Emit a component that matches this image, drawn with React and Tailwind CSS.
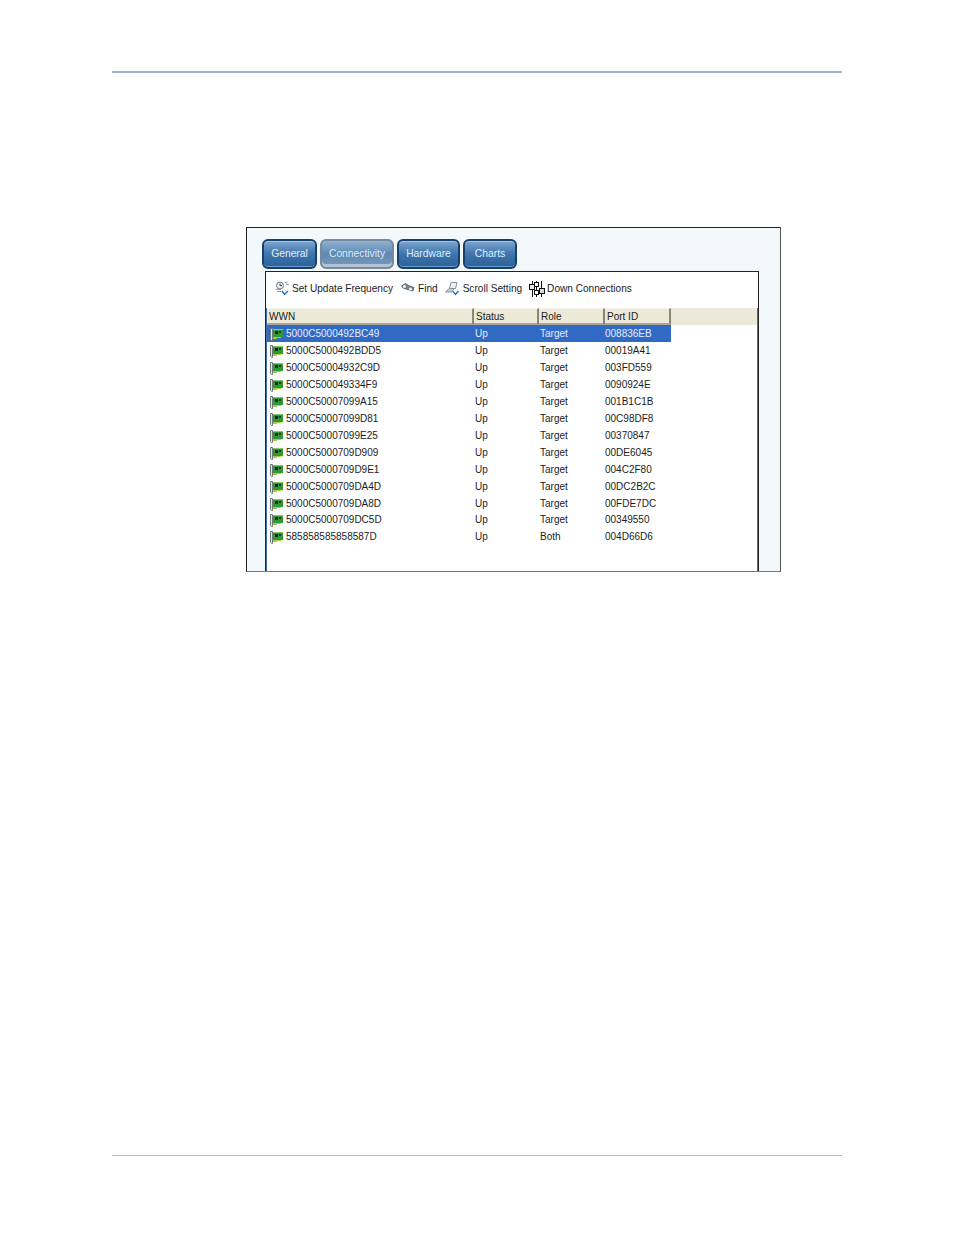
const rows = [
  ['5000C5000492BC49', 'Up', 'Target', '008836EB'],
  ['5000C5000492BDD5', 'Up', 'Target', '00019A41'],
  ['5000C50004932C9D', 'Up', 'Target', '003FD559'],
  ['5000C500049334F9', 'Up', 'Target', '0090924E'],
  ['5000C50007099A15', 'Up', 'Target', '001B1C1B'],
  ['5000C50007099D81', 'Up', 'Target', '00C98DF8'],
  ['5000C50007099E25', 'Up', 'Target', '00370847'],
  ['5000C5000709D909', 'Up', 'Target', '00DE6045'],
  ['5000C5000709D9E1', 'Up', 'Target', '004C2F80'],
  ['5000C5000709DA4D', 'Up', 'Target', '00DC2B2C'],
  ['5000C5000709DA8D', 'Up', 'Target', '00FDE7DC'],
  ['5000C5000709DC5D', 'Up', 'Target', '00349550'],
  ['585858585858587D', 'Up', 'Both', '004D66D6'],
];

const CardIcon = () => (
  <svg width="13" height="14" viewBox="0 0 13 14" className="shrink-0">
    <path d="M0.5 1.5h2v12h-1l-1-1z" fill="#e4e7ea" stroke="#70767c" strokeWidth="1" />
    <rect x="3" y="2" width="10" height="8" fill="#2f9a35" />
    <path d="M3 10h8v1H7v1H3z" fill="#a4cf3a" />
    <rect x="5" y="4" width="3" height="3" fill="#1c2a20" />
    <rect x="9" y="4" width="2" height="2" fill="#26352a" />
    <path d="M3 2.5h10" stroke="#82c96c" strokeWidth="1" />
  </svg>
);

const UpdateIcon = () => (
  <svg width="15" height="15" viewBox="0 0 15 15" className="shrink-0">
    <circle cx="5" cy="4.5" r="3.5" fill="#e3e9ee" stroke="#707e8c" />
    <path d="M5 2.5v2h2" fill="none" stroke="#3c4a5c" />
    <path d="M10 1.5h2.5M11 3.5h3M1 8.5h5M2 10.5h4" stroke="#8d99a6" />
    <path d="M7 10l2.5 3.5L13 10" fill="none" stroke="#2b6cc4" strokeWidth="1.4" />
  </svg>
);

const FindIcon = () => (
  <svg width="14" height="10" viewBox="0 0 14 10" className="shrink-0">
    <path d="M0.5 3l4-2.5 3 2 5.5 2-1 3.5-4-1-3-1-3-1z" fill="#77838e" stroke="#4f5a66" strokeWidth="0.8" />
    <circle cx="3.5" cy="3.5" r="1.5" fill="#f1f4f7" />
    <circle cx="9.5" cy="6" r="1.5" fill="#f1f4f7" />
  </svg>
);

const ScrollIcon = () => (
  <svg width="15" height="15" viewBox="0 0 15 15" className="shrink-0">
    <path d="M6 1.5h6l-1.5 6h-6z" fill="#f1f4f7" stroke="#828e9a" />
    <path d="M0.5 11l3.5-3.5h5L7 11z" fill="#c6ced6" stroke="#828e9a" />
    <path d="M8 10.5l2.5 3 3-3.5" fill="none" stroke="#2b6cc4" strokeWidth="1.4" />
  </svg>
);

const DownIcon = () => (
  <svg width="16" height="16" viewBox="0 0 16 16" className="shrink-0">
    <path d="M3.5 0v16M7.5 0v16M12.5 0v16" stroke="#111" />
    <rect x="0.5" y="3.5" width="5" height="5" fill="#e8e8e8" stroke="#111" />
    <rect x="5.5" y="1.5" width="4" height="4" fill="#fff" stroke="#111" />
    <rect x="10.5" y="7.5" width="5" height="5" fill="#d8d8d8" stroke="#111" />
    <rect x="5.5" y="9.5" width="4" height="4" fill="#fff" stroke="#111" />
  </svg>
);

const Tab = ({ label, width, active }) => (
  <div
    className={`flex h-[30px] items-center justify-center rounded-[6px] border-2 text-[10.3px] ${
      active
        ? 'border-[#77899a] bg-gradient-to-b from-[#8fb0d0] via-[#5f8ab6] to-[#7a9abb] text-[#dde8f2] shadow-[inset_0_-3px_0_#b4c3d2]'
        : 'border-[#17406c] bg-gradient-to-b from-[#7ea6cc] via-[#3d75ad] to-[#2c6199] text-[#e4edf5] shadow-[inset_0_1px_0_#a9c6e0,inset_0_-1px_0_#6d9ac6]'
    }`}
    style={{ width }}
  >
    {label}
  </div>
);

const ToolItem = ({ icon, label, gap = 'gap-[2px]' }) => (
  <div className={`flex items-center ${gap}`}>
    {icon}
    <span>{label}</span>
  </div>
);

const HeaderCell = ({ label, className }) => (
  <div className={`flex h-[17px] items-center border-t border-r-2 border-b-2 border-t-[#f6f4ea] border-r-[#8a8675] border-b-[#aca899] bg-[#ece9d8] pl-[2px] ${className}`}>
    {label}
  </div>
);

export default function App() {
  return (
    <div className="relative h-[1235px] w-[954px] overflow-hidden bg-white pt-[71px] font-['Liberation_Sans',sans-serif] text-[10px] text-[#1c1c1c]">
      <div className="mx-[112px] h-[2px] bg-[#98b4d0]" />

      <div className="ml-[246px] mt-[154px] flex h-[345px] w-[535px] flex-col border border-[#222] border-r-[#555] border-b-[#777] bg-[#f3f8fb] pl-[15px] pt-[11px]">
        <div className="flex gap-[3px]">
          <Tab label="General" width="55px" />
          <Tab label="Connectivity" width="74px" active />
          <Tab label="Hardware" width="63px" />
          <Tab label="Charts" width="54px" />
        </div>

        <div className="ml-[3px] mt-[2px] flex w-[494px] flex-1 flex-col border-x border-t border-[#222] bg-white">
          <div className="flex h-[36px] items-center pb-[3px] pl-[9px] text-[10.1px]">
            <ToolItem icon={<UpdateIcon />} label="Set Update Frequency" />
            <div className="ml-[8px]">
              <ToolItem icon={<FindIcon />} label="Find" gap="gap-[3px]" />
            </div>
            <div className="ml-[7px]">
              <ToolItem icon={<ScrollIcon />} label="Scroll Setting" gap="gap-[3px]" />
            </div>
            <div className="ml-[7px]">
              <ToolItem icon={<DownIcon />} label="Down Connections" />
            </div>
          </div>

          <div className="flex flex-1 flex-col border-x border-[#3d6fa8]">
            <div className="flex bg-[#ece9d8]">
              <HeaderCell label="WWN" className="w-[207px]" />
              <HeaderCell label="Status" className="w-[65px]" />
              <HeaderCell label="Role" className="w-[66px]" />
              <HeaderCell label="Port ID" className="w-[66px]" />
            </div>
            {rows.map((r, i) => (
              <div
                key={r[0]}
                className={`flex h-[16.92px] w-[404px] items-center pt-[2px] leading-[14px] ${i === 0 ? 'bg-[#316ac5] text-[#e8eef8]' : ''}`}
              >
                <div className="flex w-[207px] items-center gap-[3px] pl-[3px]">
                  <CardIcon />
                  <span>{r[0]}</span>
                </div>
                <div className="w-[65px] pl-px">{r[1]}</div>
                <div className="w-[65px] pl-px">{r[2]}</div>
                <div className="w-[65px] pl-px">{r[3]}</div>
              </div>
            ))}
          </div>
        </div>
      </div>

      <div className="mx-[112px] mt-[583px] h-px bg-[#a8bccf]" />
    </div>
  );
}
